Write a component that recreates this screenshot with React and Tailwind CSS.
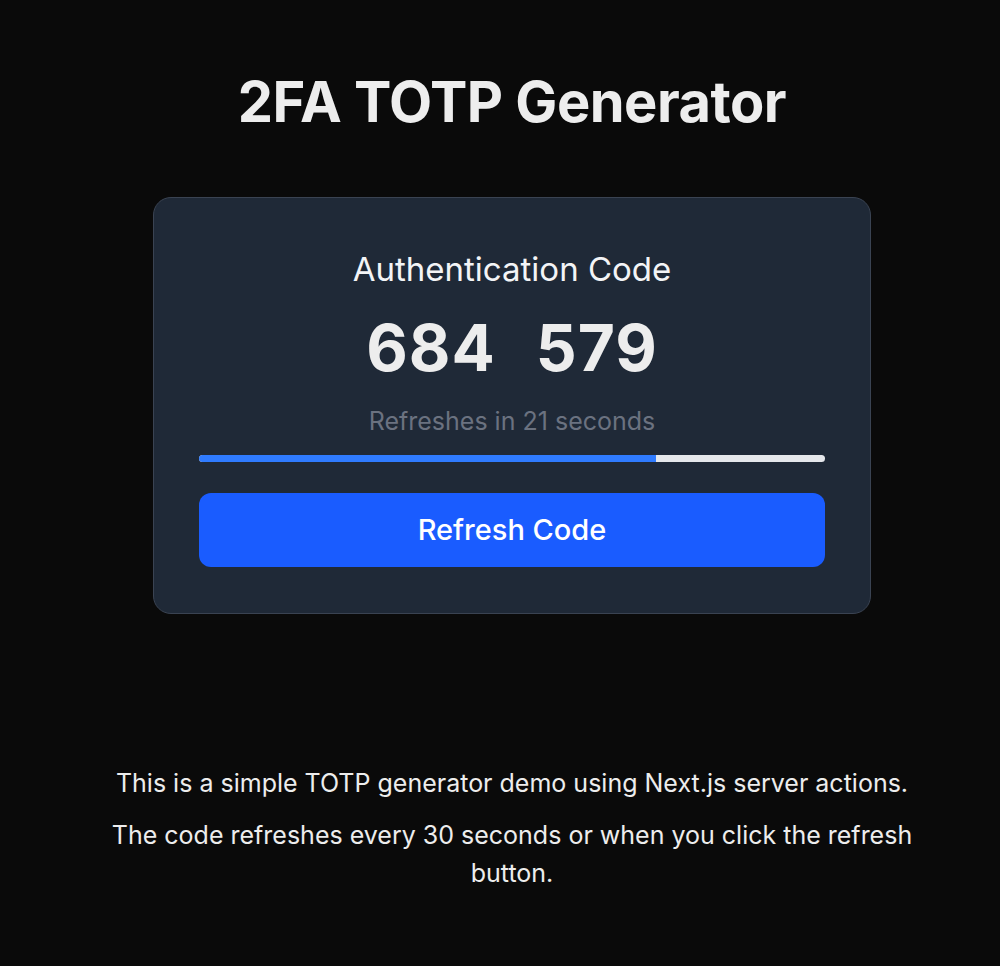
import React, { useState } from 'react';

export default function App() {
  const [seconds] = useState(21);
  const code = '684579';
  const progress = 73;

  return (
    <div
      className="min-h-[966px] w-full bg-[#0a0a0a] text-[#ededed] flex flex-col items-center pl-[24px]"
      style={{ fontFamily: 'Inter, "Liberation Sans", Arial, sans-serif' }}
    >
      {/* Title */}
      <h1 className="mt-[70px] text-[56px] leading-[64px] font-bold tracking-[-0.5px] text-[#ededed]">
        2FA TOTP Generator
      </h1>

      {/* Card */}
      <div className="mt-[63px] w-[718px] rounded-[18px] border border-[#3a4352] bg-[#1f2937] px-[45px] pt-[45px] pb-[46px] flex flex-col items-center">
        <h2 className="text-[33px] leading-[52px] font-normal text-[#f3f4f6]">Authentication Code</h2>
        <div className="mt-[17px] text-[64px] leading-[72px] font-bold tracking-[1px] text-[#ededed] flex gap-[40px]">
          <span>{code.slice(0, 3)}</span>
          <span>{code.slice(3)}</span>
        </div>
        <p className="mt-[22px] text-[25px] leading-[30px] text-[#6b7280]">Refreshes in {seconds} seconds</p>

        {/* Progress bar */}
        <div className="mt-[19px] w-full h-[7px] rounded-full bg-[#e5e7eb] overflow-hidden">
          <div className="h-full bg-[#2f7bff]" style={{ width: `${progress}%` }} />
        </div>

        <button className="mt-[31px] w-full h-[74px] rounded-[12px] bg-[#1a5cff] text-white text-[29px] font-medium">
          Refresh Code
        </button>
      </div>

      {/* Footer */}
      <div className="mt-[150px] w-[820px] text-center text-[25px] leading-[38px] text-[#ededed]">
        <p>This is a simple TOTP generator demo using Next.js server actions.</p>
        <p className="mt-[14px]">The code refreshes every 30 seconds or when you click the refresh button.</p>
      </div>
    </div>
  );
}
